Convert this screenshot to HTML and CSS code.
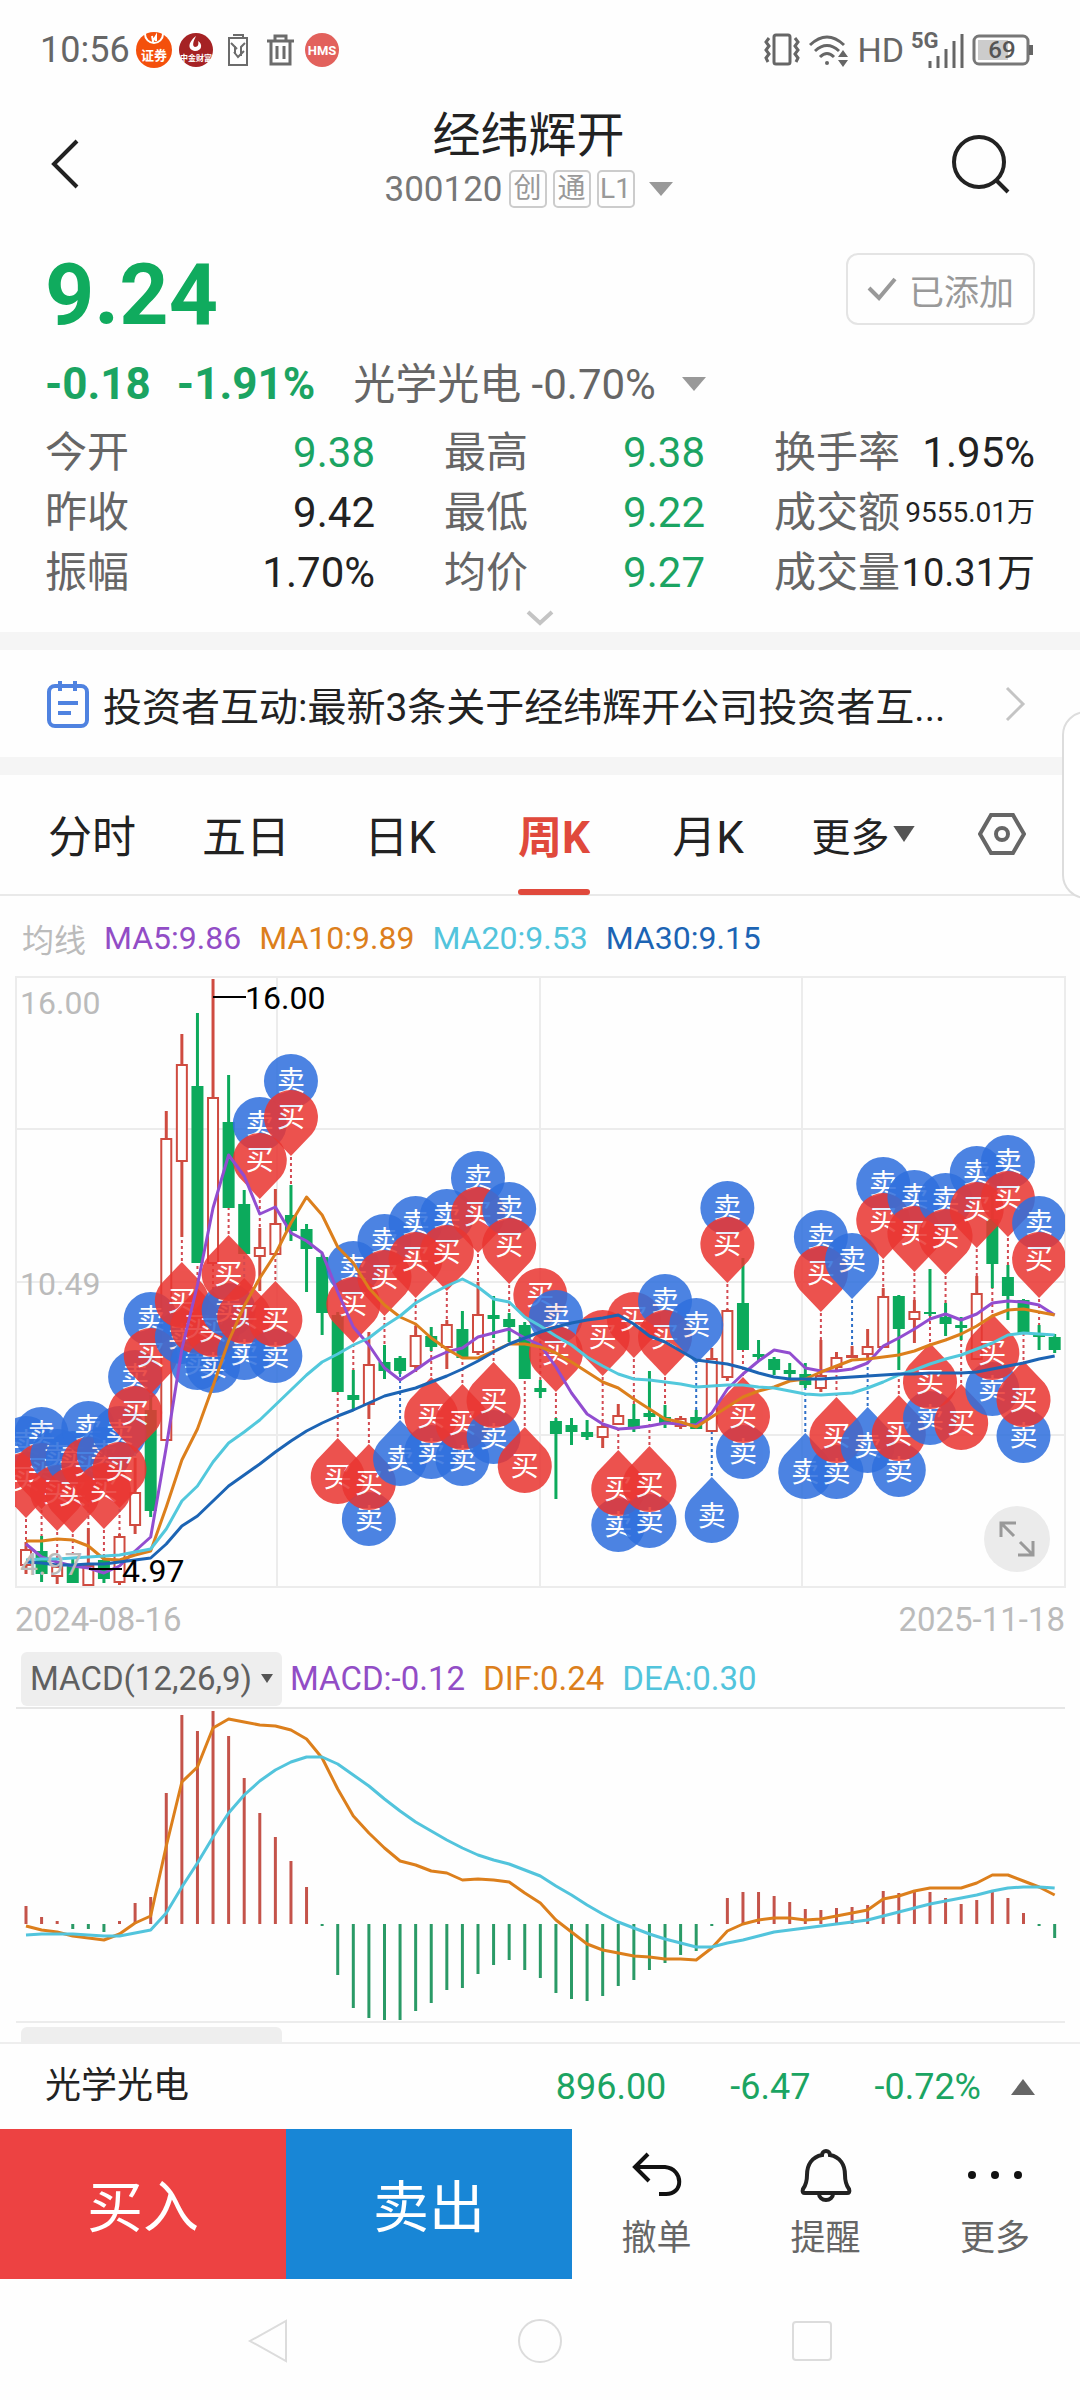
FILE: index.html
```html
<!DOCTYPE html>
<html lang="zh-CN">
<head>
<meta charset="utf-8">
<meta name="viewport" content="width=device-width, initial-scale=1">
<title>经纬辉开 300120</title>
<link rel="stylesheet" href="styles.css">
</head>
<body>
<div class="status-bar">
  <div class="status-group">
    <span class="clock">10:56</span>
    <svg class="app-dot" viewBox="0 0 36 36"><circle cx="18" cy="18" r="18" fill="#f4500c"/><path d="M9 2a9 9 0 0 0 18 0M16 4l1 5 3-5 0 5" fill="none" stroke="#fff" stroke-width="2"/><text x="18" y="28" font-size="13" font-weight="700" fill="#fff" text-anchor="middle">证券</text></svg>
    <svg class="app-dot" viewBox="0 0 36 36"><circle cx="18" cy="18" r="17" fill="#a52224"/><path d="M18 4c-9 7-8 14-1 15 7 0 8-7 3-10 1 3 0 6-3 6-3-1-2-5 1-11z" fill="#fff"/><text x="18" y="29" font-size="8" font-weight="700" fill="#fff" text-anchor="middle">中金财富</text></svg>
    <svg class="glyph-icon" viewBox="0 0 36 36"><path d="M9 6h18v27H9zM13 3h10v3H13M11 11l6 6M25 11l-4 4v9M15 14v8M14 20l4 5 6-6" fill="none" stroke="#6b6b6b" stroke-width="2"/></svg>
    <svg class="glyph-icon" viewBox="0 0 36 36"><path d="M5 9h27M13 8V4h11v4M9 10v22h19V10M15 14v13M22 14v13" fill="none" stroke="#6b6b6b" stroke-width="3"/></svg>
    <svg class="app-dot" viewBox="0 0 36 36"><circle cx="18" cy="18" r="17" fill="#e2615c"/><text x="18" y="23" font-size="13" font-weight="700" fill="#fff" text-anchor="middle">HMS</text></svg>
  </div>
  <div class="status-group">
    <svg width="38" height="36" viewBox="0 0 38 36" fill="none" stroke="#666" stroke-width="3"><rect x="11" y="3" width="16" height="29" rx="2"/><path d="M6 6l-3 4 3 4-3 4 3 4-3 4 2 4M32 6l3 4-3 4 3 4-3 4 3 4-2 4"/></svg>
    <svg width="44" height="36" viewBox="0 0 44 36" fill="none" stroke="#666" stroke-width="3"><path d="M3 13q17-16 34 0M8 19q12-11 24 0M13 25q7-7 14 0"/><circle cx="20" cy="31" r="2" fill="#666" stroke="none"/><path d="M31 25l5-7 5 7zM31 28l5 7 5-7z" fill="#666" stroke="none"/></svg>
    <span class="hd">HD</span>
    <svg width="56" height="44" viewBox="0 0 56 44"><text x="1" y="20" font-size="22" font-weight="700" fill="#666">5G</text><path d="M20 33v7M28 28v12M36 21v19M44 13v27M52 6v34" stroke="#666" stroke-width="3"/></svg>
    <svg width="62" height="36" viewBox="0 0 62 36"><rect x="2" y="4" width="54" height="28" rx="5" fill="none" stroke="#777" stroke-width="3"/><rect x="6" y="8" width="30" height="20" fill="#ccc"/><path d="M59 13v10" stroke="#666" stroke-width="4"/><text x="30" y="26" font-size="24" font-weight="500" fill="#555" text-anchor="middle">69</text></svg>
  </div>
</div>

<header class="title-bar">
  <button class="icon-btn" aria-label="返回"><svg width="40" height="56" viewBox="0 0 40 56"><path d="M32 5L9 28l23 23" fill="none" stroke="#222" stroke-width="4"/></svg></button>
  <div class="title-block">
    <h1>经纬辉开</h1>
    <div class="code-row"><span class="code">300120</span><span class="tag">创</span><span class="tag">通</span><span class="tag">L1</span><svg class="caret" viewBox="0 0 24 14"><path d="M0 0h24L12 14z" fill="#999"/></svg></div>
  </div>
  <button class="icon-btn" aria-label="搜索"><svg width="64" height="64" viewBox="0 0 64 64"><circle cx="31" cy="30" r="25" fill="none" stroke="#222" stroke-width="4"/><path d="M48 48l12 12" stroke="#222" stroke-width="4"/></svg></button>
</header>

<section class="quote">
  <div class="price-row">
    <strong class="price">9.24</strong>
    <button class="added"><svg width="30" height="26" viewBox="0 0 30 26"><path d="M2 12l10 10L28 3" fill="none" stroke="#999" stroke-width="4"/></svg>已添加</button>
  </div>
  <div class="change-row">
    <span class="delta">-0.18</span><span class="delta">-1.91%</span>
    <span class="sector">光学光电 -0.70%</span><svg class="caret" viewBox="0 0 24 14"><path d="M0 0h24L12 14z" fill="#999"/></svg>
  </div>
  <dl class="stats">
    <div><dt>今开</dt><dd class="down">9.38</dd></div>
    <div><dt>最高</dt><dd class="down">9.38</dd></div>
    <div><dt>换手率</dt><dd>1.95%</dd></div>
    <div><dt>昨收</dt><dd>9.42</dd></div>
    <div><dt>最低</dt><dd class="down">9.22</dd></div>
    <div><dt>成交额</dt><dd class="tiny">9555.01万</dd></div>
    <div><dt>振幅</dt><dd>1.70%</dd></div>
    <div><dt>均价</dt><dd class="down">9.27</dd></div>
    <div><dt>成交量</dt><dd class="compact">10.31万</dd></div>
  </dl>
  <button class="expand" aria-label="展开"><svg width="28" height="16" viewBox="0 0 28 16"><path d="M2 2l12 11L26 2" fill="none" stroke="#c4c4c4" stroke-width="4"/></svg></button>
</section>

<a class="news" href="#news">
  <svg width="46" height="52" viewBox="0 0 46 52" fill="none" stroke="#4f82e0" stroke-width="4"><rect x="4" y="8" width="38" height="40" rx="6"/><path d="M15 3v10M30 3v10M13 25h20M13 35h13"/></svg>
  <span class="news-text">投资者互动:最新3条关于经纬辉开公司投资者互...</span>
  <svg width="22" height="38" viewBox="0 0 22 38"><path d="M3 3l16 16L3 35" fill="none" stroke="#c4c4c4" stroke-width="3"/></svg>
</a>

<nav class="tabs">
  <button>分时</button>
  <button>五日</button>
  <button>日K</button>
  <button class="active">周K</button>
  <button>月K</button>
  <button class="more">更多<svg class="caret" viewBox="0 0 24 18"><path d="M0 0h24L12 18z" fill="#555"/></svg></button>
  <button aria-label="设置"><svg width="48" height="44" viewBox="0 0 48 44" fill="none" stroke="#666" stroke-width="4"><path d="M13 3h22l11 19-11 19H13L2 22z"/><circle cx="24" cy="22" r="6"/></svg></button>
</nav>

<main class="charts">
  <div class="legend">
    <span class="muted">均线</span><span class="c-purple">MA5:9.86</span><span class="c-orange">MA10:9.89</span><span class="c-cyan">MA20:9.53</span><span class="c-blue">MA30:9.15</span>
  </div>
  <div class="kline-box">
    <svg id="kline" class="plot" viewBox="0 977 1080 612" role="img" aria-label="周K线"></svg>
    <button class="fullscreen" aria-label="全屏"><svg width="40" height="40" viewBox="0 0 40 40" fill="none" stroke="#999" stroke-width="3"><path d="M4 18V4h15M5 5l12 12M36 22v14H21M35 35L23 23"/></svg></button>
  </div>
  <div class="dates"><span>2024-08-16</span><span>2025-11-18</span></div>
  <div class="legend macd-legend">
    <button class="indicator">MACD(12,26,9)<svg width="12" height="9" viewBox="0 0 12 9"><path d="M0 0h12L6 9z" fill="#555"/></svg></button><span class="c-purple">MACD:-0.12</span><span class="c-orange">DIF:0.24</span><span class="c-cyan">DEA:0.30</span>
  </div>
  <svg id="macd" class="plot" viewBox="0 1708 1080 316" role="img" aria-label="MACD"></svg>
  <div class="next-panel"></div>
</main>

<div class="index-row">
  <span class="index-name">光学光电</span>
  <span class="down">896.00</span><span class="down">-6.47</span><span class="down">-0.72%</span>
  <svg width="24" height="16" viewBox="0 0 24 16"><path d="M0 16h24L12 0z" fill="#666"/></svg>
</div>

<footer class="actions">
  <button class="trade buy">买入</button>
  <button class="trade sell">卖出</button>
  <button class="tool"><svg width="56" height="56" viewBox="0 0 56 56" fill="none" stroke="#111" stroke-width="4"><path d="M19 7L6 20l14 14M6 20h30c19 2 19 28 0 27h-6"/></svg>撤单</button>
  <button class="tool"><svg width="56" height="56" viewBox="0 0 56 56" fill="none" stroke="#222" stroke-width="4"><path d="M24 8a4 4 0 0 1 8 0c10 2 15 10 15 20 0 7 1 10 4 14 1 3 0 4-2 4H7c-2 0-3-1-2-4 3-4 4-7 4-14C9 18 14 10 24 8zM21 47a7 6 0 0 0 14 0"/></svg>提醒</button>
  <button class="tool"><svg width="56" height="56" viewBox="0 0 56 56" fill="#111"><circle cx="5" cy="28" r="4"/><circle cx="28" cy="28" r="4"/><circle cx="51" cy="28" r="4"/></svg>更多</button>
</footer>

<nav class="system-nav">
  <button aria-label="后退"><svg width="48" height="48" viewBox="0 0 48 48"><path d="M42 4v40L6 24z"/></svg></button>
  <button aria-label="主页"><svg width="48" height="48" viewBox="0 0 48 48"><circle cx="24" cy="24" r="21"/></svg></button>
  <button aria-label="最近"><svg width="48" height="48" viewBox="0 0 48 48"><rect x="5" y="5" width="38" height="38" rx="3"/></svg></button>
</nav>
<div class="side-handle"></div>
<script src="charts.js"></script>
</body>
</html>
```
FILE: styles.css
```css
* { box-sizing: border-box; }
body {
  margin: 0;
  background: #fefefe;
  color: #222;
  font-family: Roboto, "Noto Sans CJK SC", sans-serif;
  position: relative;
  overflow-x: hidden;
}
button {
  font: inherit;
  color: inherit;
  background: none;
  border: 0;
  padding: 0;
  margin: 0;
}
svg { display: block; flex: none; }
.down { color: #1ba462; }
.caret { width: 24px; height: 16px; }

.status-bar {
  height: 100px;
  padding: 0 46px 0 40px;
  display: flex;
  justify-content: space-between;
  align-items: center;
  color: #666;
  font-size: 36px;
}
.status-group { display: flex; align-items: center; gap: 6px; }
.app-dot { width: 36px; height: 36px; }
.glyph-icon { width: 36px; height: 36px; }
.hd { font-size: 34px; }

.title-bar {
  height: 126px;
  padding: 2px 68px 0 45px;
  display: flex;
  align-items: center;
  justify-content: space-between;
}
.icon-btn { width: 64px; }
.title-block { display: flex; flex-direction: column; align-items: center; padding-bottom: 8px; }
h1 { margin: 0; font-size: 48px; line-height: 58px; font-weight: 400; }
.code-row { display: flex; align-items: center; gap: 6px; height: 48px; color: #777; }
.code { font-size: 35px; }
.tag {
  width: 38px;
  height: 38px;
  border: 2px solid #ccc;
  border-radius: 5px;
  color: #999;
  font-size: 28px;
  line-height: 34px;
  text-align: center;
}
.code-row .caret { margin-left: 8px; }

.quote { padding: 0 45px; border-bottom: 18px solid #f5f5f5; }
.price-row { display: flex; justify-content: space-between; align-items: center; height: 126px; }
.price { font-size: 86px; line-height: 100px; padding-top: 12px; color: #10ab5e; font-weight: 700; }
.added {
  width: 189px;
  height: 72px;
  border: 2px solid #e4e4e4;
  border-radius: 12px;
  color: #999;
  font-size: 35px;
  display: flex;
  align-items: center;
  justify-content: center;
  gap: 12px;
}
.change-row { display: flex; align-items: baseline; height: 64px; line-height: 64px; font-size: 42px; }
.delta { color: #1ba462; font-size: 44px; font-weight: 700; margin-right: 26px; }
.sector { color: #666; margin: 0 26px 0 12px; }
.change-row .caret { align-self: center; }
.stats {
  margin: 7px 0 0;
  display: grid;
  grid-template-columns: 330fr 261fr 261fr;
  column-gap: 69px;
}
.stats div { display: flex; justify-content: space-between; align-items: center; height: 60px; min-width: 0; white-space: nowrap; }
.stats dt { font-size: 42px; line-height: 60px; color: #666; }
.stats dd { margin: 0; font-size: 42px; line-height: 60px; }
.stats .tiny { font-size: 28px; }
.stats .compact { font-size: 38px; }
.expand { display: flex; justify-content: center; align-items: center; width: 100%; height: 29px; }

.news {
  display: flex;
  align-items: center;
  height: 125px;
  padding: 0 54px 0 45px;
  border-bottom: 18px solid #f5f5f5;
  color: #222;
  text-decoration: none;
  font-size: 39px;
}
.news-text { flex: 1; margin: 0 20px 0 12px; overflow: hidden; text-overflow: ellipsis; white-space: nowrap; }

.tabs {
  height: 121px;
  padding: 0 18px 0 15px;
  border-bottom: 2px solid #e9e9e9;
  display: grid;
  grid-template-columns: repeat(5, 154fr) 157fr 120fr;
  justify-items: center;
  font-size: 44px;
}
.tabs button { height: 120px; display: flex; align-items: center; position: relative; padding-bottom: 2px; }
.tabs .more { font-size: 39px; gap: 2px; }
.tabs .active { color: #e0493c; font-weight: 700; }
.tabs .active::after {
  content: "";
  position: absolute;
  left: 0;
  right: 0;
  bottom: 0;
  height: 6px;
  border-radius: 3px;
  background: #e0493c;
}

.legend { display: flex; align-items: center; height: 80px; padding: 4px 22px 0; gap: 18px; font-size: 32px; }
.muted { color: #bbb; }
.c-purple { color: #924dc6; }
.c-orange { color: #dc7f1c; }
.c-cyan { color: #52c4dc; }
.c-blue { color: #1c64b4; }
.plot { width: 100%; height: auto; }
.kline-box { position: relative; }
.fullscreen {
  position: absolute;
  right: 30px;
  bottom: 16px;
  width: 66px;
  height: 66px;
  border-radius: 50%;
  background: #ebebeb;
  display: flex;
  align-items: center;
  justify-content: center;
}
.dates { display: flex; justify-content: space-between; align-items: center; height: 62px; padding: 0 15px; font-size: 33px; color: #bbb; }
.macd-legend { height: 57px; padding: 0 21px; font-size: 33px; }
.indicator {
  height: 54px;
  width: 261px;
  margin-right: -10px;
  background: #eee;
  border-radius: 6px;
  color: #606060;
  display: flex;
  align-items: center;
  justify-content: center;
  gap: 9px;
}
.next-panel { height: 19px; padding: 4px 21px 0; }
.next-panel::before { content: ""; display: block; width: 261px; height: 15px; background: #eee; border-radius: 6px 6px 0 0; }

.index-row {
  height: 87px;
  border-top: 2px solid #eee;
  padding: 0 45px;
  display: flex;
  align-items: center;
  font-size: 36px;
  gap: 64px;
}
.index-name { flex: 1; line-height: 48px; padding-bottom: 2px; }
.index-row svg { margin-left: -34px; }

.actions { display: grid; grid-template-columns: 286fr 286fr 169fr 169fr 170fr; height: 150px; }
.trade { color: #fff; font-size: 56px; padding-bottom: 4px; }
.buy { background: #ed4242; }
.sell { background: #1886d6; }
.tool { color: #666; font-size: 35px; line-height: 48px; display: flex; flex-direction: column; align-items: center; justify-content: center; gap: 12px; padding-top: 2px; }

.system-nav { height: 120px; padding: 4px 132px 0; display: grid; grid-template-columns: repeat(3, 1fr); justify-items: center; align-items: center; }
.system-nav svg { fill: none; stroke: #dcdcdc; stroke-width: 2; }
.side-handle {
  position: absolute;
  top: 711px;
  right: -30px;
  width: 48px;
  height: 188px;
  border: 2px solid #ddd;
  border-radius: 24px;
  background: #fff;
}
```
FILE: charts.js
```js
const NS = 'http://www.w3.org/2000/svg';
const RED = '#cf4b40', GREEN = '#0caa5c';
const xAt = i => 26 + i * 15.586;

function add(parent, name, attrs, text) {
  const el = document.createElementNS(NS, name);
  for (const k in attrs) el.setAttribute(k, attrs[k]);
  if (text) el.textContent = text;
  parent.appendChild(el);
  return el;
}
function line(p, x1, y1, x2, y2, stroke, w, dash) {
  const a = { x1, y1, x2, y2, stroke, 'stroke-width': w };
  if (dash) a['stroke-dasharray'] = dash;
  return add(p, 'line', a);
}
function curve(p, ys, stroke) {
  add(p, 'polyline', { points: ys.map((y, i) => xAt(i) + ',' + y).join(' '), fill: 'none', stroke, 'stroke-width': 3, 'stroke-linejoin': 'round' });
}

// Each candle: direction (1 up, 0 down), high, body top, body bottom, low
const candles = [
[1,1543,1550,1567,1575],[0,1537,1552,1575,1583],[1,1563,1567,1578,1585],[0,1560,1566,1584,1584],[1,1529,1566,1587,1587],
[0,1558,1561,1580,1584],[1,1535,1537,1584,1586],[1,1459,1493,1527,1535],[0,1394,1411,1512,1518],[1,1112,1139,1442,1442],
[1,1035,1065,1163,1238],[0,1014,1087,1264,1264],[1,980,1098,1265,1265],[0,1076,1123,1209,1209],[0,1191,1205,1255,1255],
[1,1229,1248,1258,1292],[1,1190,1224,1256,1256],[0,1186,1216,1232,1242],[0,1225,1230,1250,1293],[0,1255,1258,1314,1336],
[0,1313,1316,1393,1393],[0,1371,1396,1401,1412],[1,1333,1365,1406,1420],[0,1346,1363,1372,1380],[0,1357,1359,1372,1375],
[1,1327,1336,1368,1373],[0,1328,1337,1348,1352],[1,1321,1325,1349,1370],[0,1312,1330,1359,1359],[1,1283,1315,1354,1356],
[0,1297,1316,1320,1339],[0,1314,1320,1328,1343],[0,1323,1326,1380,1380],[0,1381,1389,1393,1399],[0,1419,1422,1435,1500],
[0,1419,1426,1433,1446],[0,1421,1433,1438,1441],[1,1425,1427,1439,1449],[1,1405,1416,1426,1426],[0,1405,1420,1430,1433],
[0,1372,1414,1418,1422],[0,1406,1418,1425,1429],[1,1417,1419,1428,1430],[0,1411,1418,1430,1430],[1,1349,1359,1433,1433],
[1,1310,1311,1379,1382],[0,1259,1304,1351,1351],[0,1341,1355,1358,1362],[0,1358,1360,1371,1376],[0,1364,1371,1375,1380],
[0,1364,1375,1386,1389],[1,1341,1376,1390,1393],[1,1353,1358,1369,1372],[1,1347,1356,1359,1359],[1,1330,1347,1356,1360],
[1,1289,1297,1349,1349],[0,1296,1297,1330,1371],[1,1301,1312,1321,1344],[0,1270,1313,1315,1317],[0,1304,1318,1325,1337],
[0,1318,1326,1329,1341],[1,1277,1294,1361,1361],[0,1196,1220,1265,1289],[0,1266,1278,1297,1321],[0,1300,1301,1334,1334],
[0,1326,1335,1338,1351],[0,1335,1338,1351,1354]];

// Signals: candle index, side (1 above, -1 below), kind, y of the pin centre
// kind: 'p' buy with a sell behind it, 'b' buy only, 's' sell only
const signals = [
[0,1,'p',1480],[1,1,'p',1471],[2,1,'p',1493],[3,1,'p',1495],[4,1,'p',1465],[5,1,'p',1491],[6,1,'p',1470],[7,1,'p',1414],[8,1,'p',1356],
[10,-1,'p',1302],[11,-1,'p',1328],[12,-1,'p',1331],[13,-1,'p',1275],[14,-1,'p',1318],[15,1,'p',1161],[16,-1,'p',1321],[17,1,'p',1118],
[20,-1,'b',1478],[21,1,'p',1305],[22,-1,'p',1484],[23,1,'p',1278],[24,-1,'s',1460],[25,1,'p',1260],[26,-1,'p',1417],[27,1,'p',1253],
[28,-1,'p',1424],[29,1,'p',1215],[30,-1,'p',1402],[31,1,'p',1246],[32,-1,'b',1467],[33,1,'b',1296],[34,1,'p',1354],[37,1,'b',1338],
[38,-1,'p',1490],[39,1,'b',1320],[40,-1,'p',1486],[41,1,'p',1338],[43,1,'s',1326],[44,-1,'s',1517],[45,1,'p',1245],[46,-1,'p',1417],
[50,-1,'s',1473],[51,1,'p',1274],[52,-1,'p',1437],[53,1,'s',1261],[54,-1,'s',1447],[55,1,'p',1221],[56,-1,'p',1435],[57,1,'p',1234],
[58,-1,'p',1383],[59,1,'p',1237],[60,-1,'b',1424],[61,1,'p',1210],[62,-1,'p',1354],[63,1,'p',1199],[64,-1,'p',1401],[65,1,'p',1260]];

const ma = {
'#924dd0': [1545,1558,1563,1567,1569,1574,1567,1552,1538,1448,1350,1286,1209,1156,1177,1215,1208,1234,1242,1254,1293,1328,1346,1369,1381,1371,1360,1353,1349,1338,1334,1330,1339,1346,1368,1394,1415,1425,1430,1429,1427,1424,1425,1426,1414,1390,1375,1362,1351,1354,1369,1372,1372,1370,1364,1347,1339,1330,1320,1315,1321,1315,1304,1302,1303,1306,1316],
'#dc7f1c': [1542,1542,1540,1541,1547,1560,1561,1556,1552,1508,1461,1430,1387,1342,1307,1279,1255,1224,1198,1216,1248,1264,1289,1306,1318,1325,1339,1350,1359,1359,1352,1345,1345,1348,1354,1363,1373,1383,1389,1400,1410,1420,1423,1428,1418,1408,1398,1392,1388,1382,1380,1373,1367,1361,1360,1358,1356,1352,1346,1341,1335,1327,1317,1311,1310,1313,1316],
'#52c8dc': [1561,1560,1560,1559,1558,1557,1556,1553,1550,1530,1502,1487,1463,1444,1433,1421,1406,1391,1376,1363,1355,1346,1339,1327,1317,1304,1295,1287,1280,1288,1300,1303,1318,1327,1337,1346,1358,1367,1375,1380,1381,1383,1385,1388,1387,1386,1386,1388,1389,1392,1395,1396,1395,1394,1389,1383,1376,1371,1365,1360,1356,1350,1344,1336,1334,1335,1336],
'#1c64b4': [1563,1564,1566,1566,1565,1565,1563,1561,1559,1545,1527,1517,1502,1487,1476,1465,1453,1442,1432,1424,1417,1411,1404,1397,1393,1389,1383,1377,1370,1362,1353,1345,1339,1333,1328,1324,1321,1319,1316,1325,1337,1343,1352,1361,1363,1365,1369,1374,1378,1380,1380,1380,1379,1378,1377,1376,1375,1375,1374,1374,1374,1373,1370,1367,1364,1360,1357]};

function glyph(p, x, y, sell, dir) {
  const g = add(p, 'g', { opacity: 0.86 });
  const fill = sell ? '#2f70de' : '#ea3632';
  if (dir) {
    const t = y + dir * 39, s = y + dir * 17, sweep = dir > 0 ? 1 : 0;
    add(g, 'path', { d: `M${x} ${t}L${x - 21} ${s}A27 27 0 1 ${sweep} ${x + 21} ${s}Z`, fill });
  } else add(g, 'circle', { cx: x, cy: y, r: 27, fill });
  add(g, 'text', { x, y: y + 10, 'font-size': 28, fill: '#fff', 'text-anchor': 'middle' }, sell ? '卖' : '买');
}

const k = document.getElementById('kline');
const clip = add(add(k, 'defs', {}), 'clipPath', { id: 'frame' });
add(clip, 'rect', { x: 15, y: 977, width: 1050, height: 612 });
add(k, 'rect', { x: 16, y: 978, width: 1049, height: 610, fill: 'none', stroke: '#ececec', 'stroke-width': 2 });
[1130, 1283, 1436].forEach(y => line(k, 16, y, 1065, y, '#ececec', 2));
[277, 540, 802].forEach(x => line(k, x, 978, x, 1588, '#ececec', 2));
const body = add(k, 'g', { 'clip-path': 'url(#frame)' });
candles.forEach(([up, h, t, b, l], i) => {
  const x = xAt(i), c = up ? RED : GREEN;
  line(body, x, h, x, t, c, 3);
  line(body, x, b, x, l, c, 3);
  if (up) add(body, 'rect', { x: x - 5, y: t + 1, width: 10, height: Math.max(b - t - 2, 1), fill: '#fff', stroke: c, 'stroke-width': 2 });
  else add(body, 'rect', { x: x - 6, y: t, width: 12, height: b - t, fill: c });
});
signals.forEach(([i, side, kind, y]) => {
  const x = xAt(i), end = side > 0 ? candles[i][1] : candles[i][4];
  line(body, x, y + side * 40, x, end, kind === 's' ? '#2f70c8' : '#d24a52', 2, '3 3');
  if (kind === 'p') glyph(body, x, y - side * 36, true, 0);
  glyph(body, x, y, kind === 's', side);
});
for (const c in ma) curve(body, ma[c], c);
const label = (x, y, t, fill) => add(k, 'text', { x, y, 'font-size': 32, fill }, t);
label(20, 1015, '16.00', '#bbb');
label(20, 1296, '10.49', '#bbb');
label(20, 1576, '4.97', '#bbb');
line(k, 213, 998, 246, 998, '#000', 2);
label(245, 1010, '16.00', '#000');
line(k, 89, 1570, 122, 1570, '#000', 2);
label(122, 1583, '4.97', '#000');

const ends = [1907,1918,1922,1930,1930,1933,1922,1904,1898,1794,1716,1732,1712,1737,1779,1814,1838,1862,1888,1927,1976,2009,2019,2021,2021,2012,2004,1991,1989,1975,1966,1961,1971,1979,1994,2000,2002,1997,1987,1981,1971,1964,1956,1952,1927,1899,1893,1893,1897,1903,1910,1911,1909,1908,1906,1892,1894,1893,1893,1899,1905,1901,1893,1899,1914,1927,1939];
const dif = [1927,1931,1933,1937,1939,1941,1935,1924,1917,1847,1783,1768,1729,1720,1723,1726,1727,1731,1740,1759,1790,1817,1834,1849,1862,1866,1872,1874,1881,1880,1881,1883,1894,1904,1921,1933,1945,1951,1954,1957,1958,1960,1960,1961,1949,1932,1925,1921,1919,1919,1921,1920,1917,1914,1911,1900,1897,1892,1889,1889,1889,1884,1876,1876,1882,1888,1896];
const dea = [1936,1935,1935,1935,1936,1937,1937,1934,1931,1914,1888,1864,1838,1814,1796,1782,1771,1763,1758,1758,1765,1776,1787,1800,1812,1823,1832,1841,1849,1856,1861,1865,1871,1877,1887,1896,1906,1915,1923,1929,1935,1940,1944,1948,1948,1944,1941,1937,1933,1931,1929,1927,1925,1923,1921,1917,1913,1909,1905,1902,1899,1896,1892,1889,1888,1888,1889];
const m = document.getElementById('macd');
line(m, 16, 1709, 1065, 1709, '#e6e6e6', 2);
line(m, 16, 2023, 1065, 2023, '#ececec', 2);
ends.forEach((y, i) => line(m, xAt(i), 1925, xAt(i), y, y < 1925 ? '#c4534a' : '#2a9a66', 3));
curve(m, dif, '#dc7f1c');
curve(m, dea, '#52c4dc');
```
